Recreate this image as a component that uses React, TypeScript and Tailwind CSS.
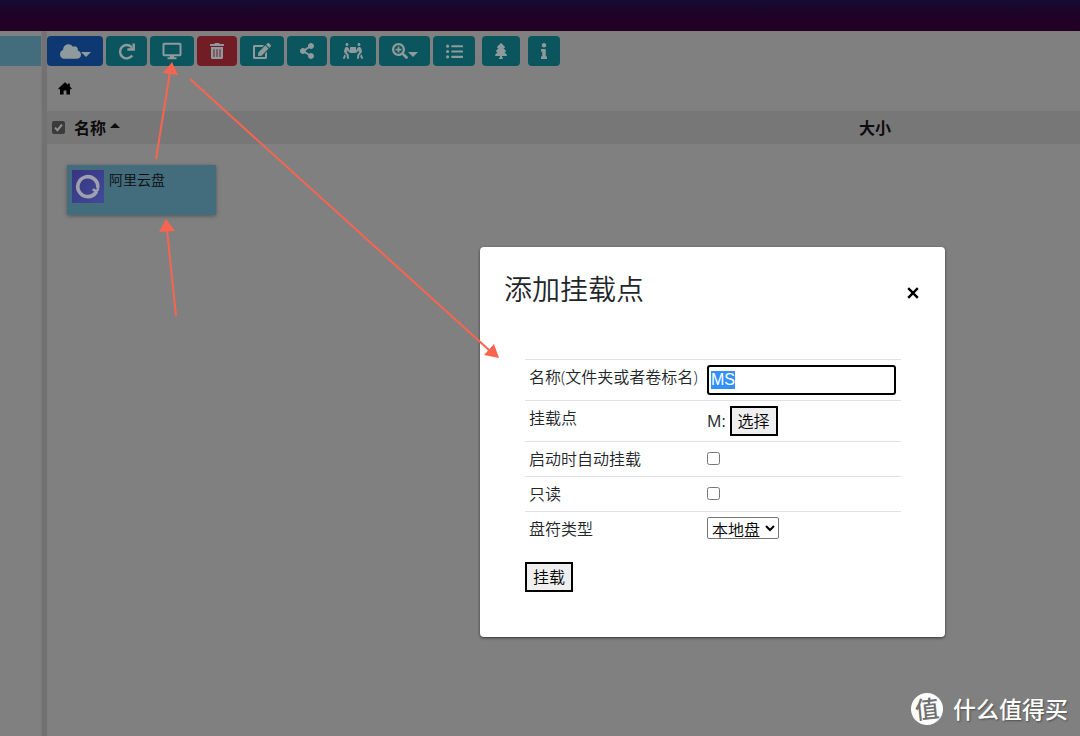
import type { ReactNode } from 'react'
import {
  FaCloud,
  FaEdit,
  FaInfo,
  FaListUl,
  FaPeopleCarry,
  FaSearchPlus,
  FaShareAlt,
  FaTrashAlt,
  FaTree,
} from 'react-icons/fa'

function ToolButton({ label, className, children }: { label: string; className: string; children: ReactNode }) {
  return (
    <button
      type="button"
      aria-label={label}
      className={`flex h-[30px] shrink-0 items-center justify-center rounded text-base text-[#8f9a9c] ${className}`}
    >
      {children}
    </button>
  )
}

function Caret({ className }: { className: string }) {
  return (
    <svg viewBox="0 0 10 5" className={`h-[5px] w-[10px] ${className}`} fill="currentColor">
      <path d="M0 0h10L5 5z" />
    </svg>
  )
}

function HomeIcon() {
  return (
    <svg viewBox="0 0 14 13" className="h-[13px] w-[14px]" fill="black">
      <path d="M7 0.2L10 2.8V1.4h1.8v3L13.8 6.4l-0.6 0.8H12v5.2H8.4V8.6H5.6v3.8H2V7.2H0.8L0.2 6.4z" />
    </svg>
  )
}

function RefreshIcon() {
  return (
    <svg viewBox="0 0 16 16" className="size-[17px]" fill="none" stroke="currentColor" strokeWidth="2.3">
      <path d="M13.4 11.8A6.3 6.3 0 1 1 12.6 3.6" />
      <path d="M14.8 0.4V6.2H8.8" />
      <path d="M13.6 2.6V5.4H10.8z" fill="currentColor" stroke="none" />
    </svg>
  )
}

function MonitorIcon() {
  return (
    <svg viewBox="0 0 20 18" className="h-[18px] w-5" fill="none" stroke="currentColor" strokeWidth="2">
      <rect x="1.5" y="1.8" width="17" height="11.4" rx="0.6" />
      <path d="M8 14.5h4M5.5 16.3h9" />
    </svg>
  )
}

function DriveIcon() {
  return (
    <svg viewBox="0 0 32 33" className="h-[33px] w-8 shrink-0">
      <defs>
        <linearGradient id="drive" x1="0" y1="0" x2="1" y2="1">
          <stop offset="0" stopColor="#383480" />
          <stop offset="1" stopColor="#404c98" />
        </linearGradient>
      </defs>
      <rect width="32" height="33" fill="url(#drive)" />
      <g fill="none" stroke="#a0a0b0" strokeWidth="3.6" strokeLinecap="round">
        <path d="M24 22.4A10 10 0 1 1 25.8 17" />
        <path d="M26 19.4Q24.6 22.2 21.6 19.8" strokeWidth="2.6" />
      </g>
    </svg>
  )
}

function Toolbar() {
  return (
    <div className="flex gap-[3px] pt-[5px]">
      <ToolButton label="云盘" className="w-14 bg-[#0e3872]">
        <FaCloud className="size-[21px]" />
        <Caret className="mt-[7px]" />
      </ToolButton>
      <ToolButton label="刷新" className="w-[41px] bg-[#0b555e]">
        <RefreshIcon />
      </ToolButton>
      <ToolButton label="挂载" className="w-11 bg-[#0b555e]">
        <MonitorIcon />
      </ToolButton>
      <ToolButton label="删除" className="w-10 bg-[#721c26]">
        <FaTrashAlt />
      </ToolButton>
      <ToolButton label="编辑" className="w-11 bg-[#0b555e]">
        <FaEdit className="size-[18px]" />
      </ToolButton>
      <ToolButton label="分享" className="w-10 bg-[#0b555e]">
        <FaShareAlt />
      </ToolButton>
      <ToolButton label="协作" className="w-[46px] bg-[#0b555e]">
        <FaPeopleCarry className="size-5" />
      </ToolButton>
      <ToolButton label="缩放" className="w-[51px] bg-[#0b555e]">
        <FaSearchPlus />
        <Caret className="mt-[7px]" />
      </ToolButton>
      <ToolButton label="列表" className="mr-1 w-[42px] bg-[#0b555e]">
        <FaListUl className="size-[17px]" />
      </ToolButton>
      <ToolButton label="目录树" className="mr-[5px] w-[38px] bg-[#0b555e]">
        <FaTree />
      </ToolButton>
      <ToolButton label="信息" className="w-8 bg-[#0b555e]">
        <FaInfo />
      </ToolButton>
    </div>
  )
}

function MountDialog() {
  return (
    <div
      role="dialog"
      aria-labelledby="dialog-title"
      className="absolute top-[247px] right-[135px] w-[465px] rounded bg-white px-6 pb-[45px] font-[350] text-[#212529] shadow-[0_1px_3px_rgba(0,0,0,0.6)]"
    >
      <div className="flex items-center justify-between pt-6">
        <h2 id="dialog-title" className="text-[28px] leading-9">添加挂载点</h2>
        <button type="button" aria-label="关闭" className="mt-2 flex size-4 items-center justify-center text-black">
          <svg viewBox="0 0 12 12" className="size-3" stroke="currentColor" strokeWidth="2.4">
            <path d="M1.2 1.2l9.6 9.6M10.8 1.2L1.2 10.8" />
          </svg>
        </button>
      </div>
      <form className="mt-[52px] mr-5 ml-[21px]">
        <table className="w-full border-collapse text-base leading-6">
          <tbody>
            <tr className="h-[41px] border-t border-[#dee2e6]">
              <td className="w-[177px] pl-1 pt-[5px] align-top whitespace-nowrap">
                <label htmlFor="name">名称(文件夹或者卷标名)</label>
              </td>
              <td className="px-[5px] pt-[5px] align-top">
                <input
                  id="name"
                  type="text"
                  defaultValue="MS"
                  autoFocus
                  onFocus={(e) => e.target.select()}
                  className="block h-[30px] w-full rounded-[3px] border-2 border-black px-[2px] font-['Liberation_Sans'] text-base font-normal outline-none selection:bg-[#3390ff] selection:text-white"
                />
              </td>
            </tr>
            <tr className="h-[41px] border-t border-[#dee2e6]">
              <td className="pl-1 pt-[5px] align-top">挂载点</td>
              <td className="px-[5px] pt-[5px] align-top">
                <div className="flex items-center gap-1">
                  <span className="font-normal">M:</span>
                  <button type="button" className="h-[30px] w-12 border-2 border-black bg-[#efefef] text-black">选择</button>
                </div>
              </td>
            </tr>
            <tr className="h-[35px] border-t border-[#dee2e6]">
              <td className="pl-1 pt-[5px] align-top">
                <label htmlFor="auto">启动时自动挂载</label>
              </td>
              <td className="px-[5px] pt-[10px] align-top">
                <input id="auto" type="checkbox" className="block size-[13px]" />
              </td>
            </tr>
            <tr className="h-[35px] border-t border-[#dee2e6]">
              <td className="pl-1 pt-[5px] align-top">
                <label htmlFor="readonly">只读</label>
              </td>
              <td className="px-[5px] pt-[10px] align-top">
                <input id="readonly" type="checkbox" className="block size-[13px]" />
              </td>
            </tr>
            <tr className="h-[35px] border-t border-[#dee2e6]">
              <td className="pl-1 pt-[5px] align-top">
                <label htmlFor="type">盘符类型</label>
              </td>
              <td className="px-[5px] pt-[5px] align-top">
                <select id="type" className="block h-[22px] w-[72px] rounded-[2px] border border-[#767676] bg-white text-base leading-5 text-black">
                  <option>本地盘</option>
                </select>
              </td>
            </tr>
          </tbody>
        </table>
        <button type="button" className="mt-[15px] block h-[30px] w-12 border-2 border-black bg-[#efefef] text-black">挂载</button>
      </form>
    </div>
  )
}

// Red guide arrows drawn across the page
function Arrows() {
  return (
    <svg width="520" height="380" className="pointer-events-none absolute top-0 left-0" stroke="#f9644f" strokeWidth="2">
      <path d="M156 159L170 72M190 79L489 350M176 316L167 230" />
      <g fill="#f9644f" stroke="none">
        <path d="M172 62L163 73L178 75z" />
        <path d="M499 358L484 355L494 344z" />
        <path d="M166 219L159 232L175 231z" />
      </g>
    </svg>
  )
}

function Watermark() {
  return (
    <div className="absolute right-3 bottom-[11px] flex items-center gap-[10px] text-white">
      <span className="flex size-8 items-center justify-center rounded-full bg-white text-2xl leading-8 font-medium text-[#707070]">
        <span className="-rotate-6">值</span>
      </span>
      <span className="text-[23px] leading-8 font-medium [text-shadow:1px_1px_2px_rgba(0,0,0,0.4)]">什么值得买</span>
    </div>
  )
}

export default function App() {
  return (
    <div className="relative flex min-h-screen flex-col overflow-hidden bg-[#808080] font-['Open_Sans','Noto_Sans_CJK_SC',sans-serif] text-[#0c0c0c]">
      <header className="h-[31px] bg-linear-to-b from-[#130a33] via-[#1f0226] to-[#220024]" />
      <div className="flex flex-1">
        <aside className="w-[41px] pt-[5px]">
          <div className="h-[30px] bg-[#436c7c]" />
        </aside>
        <div className="w-[6px] border-l border-[#7a7a7a] bg-[#727272]" />
        <main className="flex-1">
          <Toolbar />
          <nav className="flex h-[45px] items-center pl-[11px]">
            <a href="#" aria-label="主页"><HomeIcon /></a>
          </nav>
          <div className="flex h-[33px] items-center bg-[#777777] font-bold">
            <label className="flex flex-1 items-center pl-[5px]">
              <input type="checkbox" defaultChecked className="peer sr-only" />
              <svg viewBox="0 0 13 13" className="mr-[9px] size-[13px]">
                <rect width="13" height="13" rx="2" fill="#3b3b3b" />
                <path d="M3 6.6l2.4 2.6L10 3.6" fill="none" stroke="#909090" strokeWidth="2" />
              </svg>
              名称
              <Caret className="mb-1 ml-1 rotate-180" />
            </label>
            <span className="w-[221px]">大小</span>
          </div>
          <div className="p-5 pt-[21px]">
            <div className="flex h-[50px] w-[149px] gap-[5px] bg-[#436c7c] p-[5px] text-sm leading-5 shadow-[0_1px_4px_rgba(0,0,0,0.35)]">
              <DriveIcon />
              <span className="font-[350]">阿里云盘</span>
            </div>
          </div>
        </main>
      </div>
      <MountDialog />
      <Arrows />
      <Watermark />
    </div>
  )
}
